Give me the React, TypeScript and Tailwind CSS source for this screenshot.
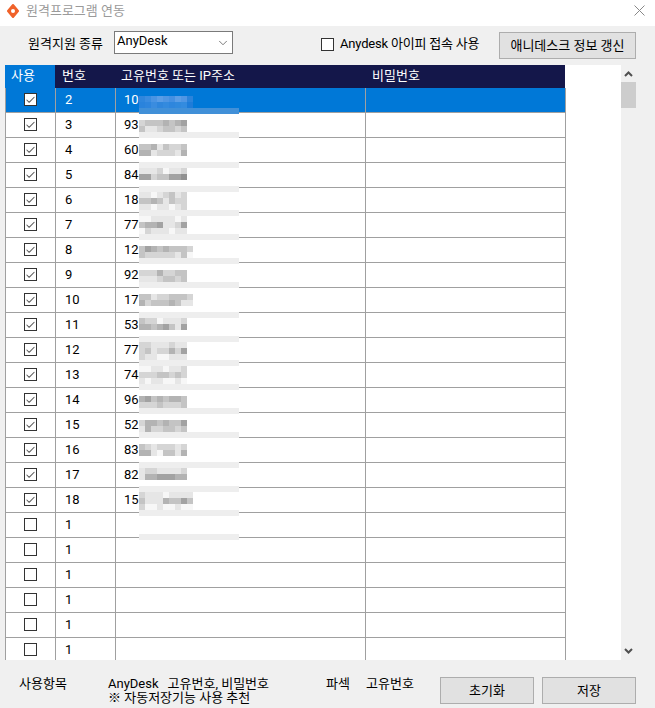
import { Check, ChevronDown } from "lucide-react";

const FONT = "font-['Roboto','Noto_Sans_CJK_KR',sans-serif]";

// row number and the two digits of the id that stay readable
const ROWS = [
  { no: "2", id: "10" },
  { no: "3", id: "93" },
  { no: "4", id: "60" },
  { no: "5", id: "84" },
  { no: "6", id: "18" },
  { no: "7", id: "77" },
  { no: "8", id: "12" },
  { no: "9", id: "92" },
  { no: "10", id: "17" },
  { no: "11", id: "53" },
  { no: "12", id: "77" },
  { no: "13", id: "74" },
  { no: "14", id: "96" },
  { no: "15", id: "52" },
  { no: "16", id: "83" },
  { no: "17", id: "82" },
  { no: "18", id: "15" },
];

// blurred-out ids: page y of the mosaic, and one grey digit per 6px cell
const MOSAICS: { y: number; cells: string[] }[] = [
  { y: 120, cells: ["dcccbcba", "ceedccdc"] },
  { y: 144, cells: ["ccbecddc", "bbedddeb"] },
  { y: 168, cells: ["eeedfeed", "aadccaa9"] },
  { y: 192, cells: ["eefedced", "ccbcecdd", "eefeefed"] },
  { y: 216, cells: ["ffeeeefe", "cbbaeeda", "fdeeefee"] },
  { y: 246, cells: ["cabcbcccd", "cdddddecf"] },
  { y: 270, cells: ["dddbddcc", "eeedccdc"] },
  { y: 294, cells: ["cceddcccd", "bdcccbcee"] },
  { y: 318, cells: ["cddfeeed", "bbcbacea"] },
  { y: 342, cells: ["ddeeedee", "dceddbda", "deeffeee"] },
  { y: 366, cells: ["ffeefeed", "dddccdcd", "efeeffef"] },
  { y: 396, cells: ["bacbcbbc", "dddcdddc"] },
  { y: 420, cells: ["dbbcbcca", "ebddccdc"] },
  { y: 444, cells: ["cdeddded", "bbefcceb"] },
  { y: 468, cells: ["eddeeeed", "ebbaaabb"] },
  { y: 492, cells: ["deeefeeee", "ceeebccac", "dffeffeff"] },
];

const BLUE_MOSAIC = [
  ["#2f86dd", "#3a8ce0", "#4a94e3", "#5a9de6", "#4f96e3", "#4490e2", "#5a9de6", "#4f96e4", "#2a83db"],
  ["#2a83dc", "#2e85dd", "#3a8cdf", "#2f86dc", "#338ade", "#2e86dd", "#3089dd", "#338bdf", "#1e7cd9"],
];

const BANDS = [132, 162, 186, 210, 234, 258, 282, 312, 336, 360, 384, 408, 432, 462, 486, 510, 534];

function grey(c: string) {
  const v = parseInt(c, 16) * 17 - 8;
  return `rgb(${v},${v},${v})`;
}

function CheckBox({ checked }: { checked?: boolean }) {
  return (
    <div className="flex h-[13px] w-[13px] items-center justify-center border border-[#333333] bg-white">
      {checked && <Check size={12} strokeWidth={2.2} className="text-[#555555]" />}
    </div>
  );
}

function Row({ no, id, checked, selected }: { no: string; id?: string; checked?: boolean; selected?: boolean }) {
  return (
    <div
      className={`flex h-[25px] w-[561px] shrink-0 border-b border-l border-r border-[#a0a0a0] text-[13px] leading-[24px] ${
        selected ? "bg-[#0078d7] text-white" : "bg-white text-black"
      }`}
    >
      <div className="flex w-[50px] justify-center border-r border-[#a0a0a0] pt-[5px]">
        <CheckBox checked={checked} />
      </div>
      <div className="w-[60px] border-r border-[#a0a0a0] pl-[9px]">{no}</div>
      <div className="w-[250px] border-r border-[#a0a0a0] pl-[8px]">{id}</div>
    </div>
  );
}

function Mosaic({ y, cells }: { y: number; cells: string[] }) {
  return (
    <div className="absolute left-[134px]" style={{ top: y - 65 }}>
      {cells.map((line, i) => (
        <div key={i} className="flex">
          {line.split("").map((c, j) => (
            <div key={j} className="h-[6px] w-[6px]" style={{ backgroundColor: grey(c) }} />
          ))}
        </div>
      ))}
    </div>
  );
}

function WinButton({ label, className }: { label: string; className: string }) {
  return (
    <button className={`flex h-[27px] items-center justify-center border border-[#adadad] bg-[#e1e1e1] text-[13px] text-black ${className}`}>
      {label}
    </button>
  );
}

export default function App() {
  return (
    <div className={`flex h-[708px] w-[655px] flex-col overflow-hidden bg-[#f0f0f0] ${FONT}`}>
      {/* title bar */}
      <div className="flex h-[26px] shrink-0 items-center bg-white pl-[7px] pr-[10px]">
        <svg width="12" height="14" viewBox="0 0 12 14" className="mb-[4px] mr-[7px]">
          <path d="M6 1 L11 7 L6 13 L1 7 Z" fill="#f0622a" stroke="#f0622a" strokeWidth="2" strokeLinejoin="round" />
          <circle cx="6" cy="7" r="2" fill="white" />
        </svg>
        <span className="mb-[4px] text-[13px] text-[#9a9a9a]">원격프로그램 연동</span>
        <svg width="11" height="11" viewBox="0 0 11 11" className="mb-[6px] ml-auto">
          <path d="M0.5 0.5 L10.5 10.5 M10.5 0.5 L0.5 10.5" stroke="#888888" strokeWidth="1" />
        </svg>
      </div>

      {/* toolbar */}
      <div className="flex h-[39px] shrink-0 text-[13px] text-black">
        <span className="ml-[28px] mt-[8px] w-[86px] leading-[20px]">원격지원 종류</span>
        <div className="mt-[5px] flex h-[23px] w-[119px] items-center justify-between border border-[#7a7a7a] bg-white pl-[2px] pr-[2px]">
          <span className="mb-[3px]">AnyDesk</span>
          <ChevronDown size={14} strokeWidth={1.2} className="text-[#444444]" />
        </div>
        <div className="ml-[88px] mt-[12px]">
          <CheckBox />
        </div>
        <span className="ml-[6px] mt-[8px] w-[159px] leading-[20px] tracking-[-0.2px]">Anydesk 아이피 접속 사용</span>
        <WinButton label="애니데스크 정보 갱신" className="mt-[6px] w-[137px]" />
      </div>

      {/* grid */}
      <div className="ml-[5px] flex h-[595px] shrink-0">
        <div className="relative h-full w-[616px] overflow-hidden bg-white">
          <div className="flex h-[23px] w-[560px] bg-[#14174a] text-[13px] leading-[22px] text-white">
            <div className="w-[50px] bg-[#0078d7] pl-[6px]">사용</div>
            <div className="w-[60px] pl-[7px]">번호</div>
            <div className="w-[250px] pl-[6px]">고유번호 또는 IP주소</div>
            <div className="pl-[7px]">비밀번호</div>
          </div>
          {ROWS.map((r, i) => (
            <Row key={r.no} no={r.no} id={r.id} checked selected={i === 0} />
          ))}
          {[0, 1, 2, 3, 4, 5].map((i) => (
            <Row key={i} no="1" />
          ))}

          {/* redaction over the id column */}
          <div className="absolute left-[134px] top-[31px] flex flex-col">
            {BLUE_MOSAIC.map((line, i) => (
              <div key={i} className="flex">
                {line.map((c, j) => (
                  <div key={j} className="h-[6px] w-[6px]" style={{ backgroundColor: c }} />
                ))}
              </div>
            ))}
          </div>
          <div className="absolute left-[134px] top-[43px] h-[6px] w-[100px] bg-[#4190d8]" />
          {MOSAICS.map((m) => (
            <Mosaic key={m.y} y={m.y} cells={m.cells} />
          ))}
          {BANDS.map((y) => (
            <div key={y} className="absolute left-[134px] h-[6px] w-[100px] bg-[#eeeeee]" style={{ top: y - 65 }} />
          ))}
        </div>

        {/* scrollbar */}
        <div className="flex w-[15px] flex-col bg-[#f0f0f0]">
          <div className="flex h-[17px] items-center justify-center">
            <svg width="9" height="6" viewBox="0 0 9 6">
              <path d="M1 5 L4.5 1.5 L8 5" fill="none" stroke="#505050" strokeWidth="2" />
            </svg>
          </div>
          <div className="h-[26px] bg-[#cdcdcd]" />
          <div className="flex flex-1 items-end justify-center pb-[6px]">
            <svg width="9" height="6" viewBox="0 0 9 6">
              <path d="M1 1 L4.5 4.5 L8 1" fill="none" stroke="#505050" strokeWidth="2" />
            </svg>
          </div>
        </div>
      </div>

      {/* footer */}
      <div className="flex flex-1 pl-[19px] text-[13px] text-black">
        <span className="mt-[15px] w-[89px] leading-[18px]">사용항목</span>
        <div className="mt-[17px] w-[218px]">
          <div className="flex h-[14px] gap-[9px] leading-[14px]">
            <span>AnyDesk</span>
            <span>고유번호, 비밀번호</span>
          </div>
          <div className="leading-[14px]">※ 자동저장기능 사용 추천</div>
        </div>
        <span className="mt-[15px] w-[40px] leading-[18px]">파섹</span>
        <span className="mt-[15px] w-[74px] leading-[18px]">고유번호</span>
        <WinButton label="초기화" className="mt-[17px] w-[94px]" />
        <WinButton label="저장" className="ml-[8px] mt-[17px] w-[94px]" />
      </div>
    </div>
  );
}
